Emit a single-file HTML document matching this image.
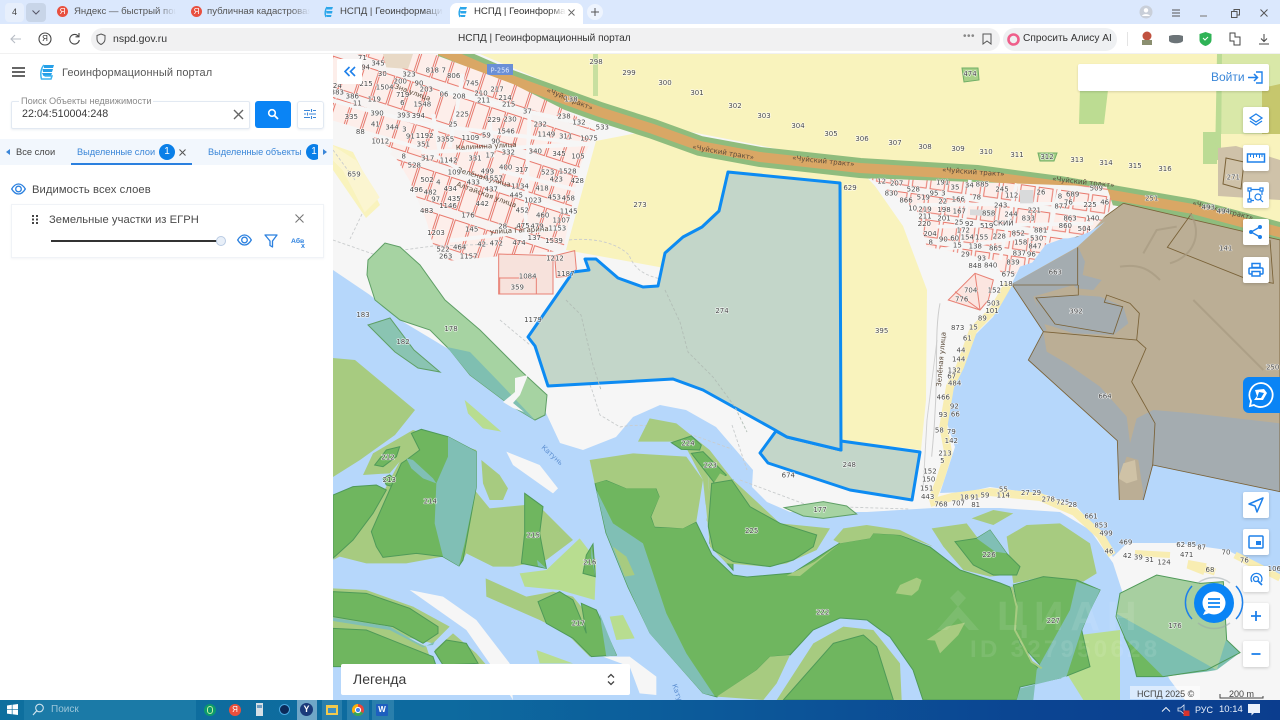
<!DOCTYPE html>
<html lang="ru"><head><meta charset="utf-8"><title>НСПД | Геоинформационный портал</title>
<style>
html,body{margin:0;padding:0;width:1280px;height:720px;overflow:hidden;background:#fff;font-family:"Liberation Sans","Noto Sans CJK SC",sans-serif}
.a{position:absolute;white-space:nowrap}
.btn{position:absolute;width:26px;height:26px;left:1243px;background:#fff;border-radius:2px;box-shadow:0 1px 3px rgba(0,0,0,.18)}
.btn svg{position:absolute;left:3px;top:3px}
svg text{font-family:"DejaVu Sans",sans-serif}
.lb text{font-size:21px;fill:#4a4a4a;text-anchor:middle;dominant-baseline:central;paint-order:stroke;stroke:#fff;stroke-width:4px;stroke-linejoin:round;stroke-opacity:.75}
.tab{position:absolute;top:5px;font-size:9.6px;color:#444;height:14px;line-height:14px;overflow:hidden;white-space:nowrap;-webkit-mask-image:linear-gradient(90deg,#000 82%,transparent);mask-image:linear-gradient(90deg,#000 82%,transparent)}
</style></head><body>

<!-- MAP -->
<svg class="a" style="left:0;top:0" width="1280" height="720" viewBox="0 0 1280 720">
<defs>
<pattern id="p" patternUnits="userSpaceOnUse" width="50" height="118" patternTransform="rotate(18)">
<rect width="50" height="118" fill="#f7f3f2"/>
<rect x="3" y="6" width="44" height="88" fill="#fdeeea" stroke="#e8786c" stroke-width="3"/>
</pattern>
<pattern id="q" patternUnits="userSpaceOnUse" width="54" height="72" patternTransform="rotate(8)">
<rect width="54" height="72" fill="#f6f5f4"/>
<rect x="4" y="6" width="42" height="50" fill="#fdeeea" stroke="#e8786c" stroke-width="3"/>
</pattern>
<clipPath id="mc"><rect x="333" y="54" width="947" height="646"/></clipPath>
</defs>
<g clip-path="url(#mc)">
<rect x="333" y="54" width="947" height="646" fill="#b6d7fb"/>
<!-- main land -->
<polygon fill="#f6f6f6" points="333,54 1280,54 1280,240 1107,223 1043,247 1013,283 993,317 973,337 960,367 950,400 947,423 955,447 940,493 967,492 990,487 1047,495 1077,507 1097,530 1113,557 1127,543 1177,543 1227,550 1280,577 1280,700 1185,700 1170,680 1125,600 1113,563 1090,530 1060,512 1000,508 933,508 867,512 790,512 767,502 752,487 753,470 716,427 686,410 660,405 633,417 616,437 583,450 560,443 546,413 530,410 490,385 450,350 400,320 370,295 333,270"/>
<!-- yellow -->
<polygon fill="#f9f3bd" points="480,54 1280,54 1280,225 1190,205 1060,183 860,165 640,122"/>
<polygon fill="#f9f3bd" points="596,141 653,130 860,170 875,186 903,226 927,290 926,400 921,450 840,440 840,300 566,250"/>
<polygon fill="#f9f3bd" points="333,145 353,152 380,205 366,218 333,170"/>
<!-- top right patches -->
<polygon fill="#d9e8a8" points="1217,54 1280,54 1280,134 1217,134"/>
<polygon fill="#c6c76d" points="1262,88 1280,84 1280,134 1262,134"/>
<polygon fill="#bcdc92" points="1080,88 1108,90 1104,124 1079,124"/>
<polygon fill="#bbdb94" points="1203,132 1217,132 1217,164 1203,164"/>
<polygon fill="#bbdb94" points="1217,54 1222,54 1221,160 1215,160"/>
<polygon fill="#c8dfa0" points="593,54 598,54 598,96 593,96"/>
<polygon fill="#a8d088" stroke="#6fae66" points="962,68 978,68 979,80 964,82"/>
<polygon fill="#a8d088" stroke="#6fae66" points="1038,153 1057,153 1054,161 1040,161"/>
<polygon fill="#f9f3bd" points="1221,134 1280,134 1280,210 1221,200"/>
<polygon fill="#cfc2a9" points="1218,148 1236,146 1280,160 1280,200 1218,196"/>
<path d="M1226 158l18 4-3 27-18-5z" fill="none" stroke="#7a6238"/>
<!-- road -->
<polyline fill="none" stroke="#8fbc7d" stroke-width="20" points="440,50 500,76 600,112 653,129 700,146 760,157 860,168 977,175 1060,186 1193,209 1290,235"/>
<polyline fill="none" stroke="#d9a765" stroke-width="10" points="440,50 500,76 600,112 653,129 700,146 760,157 860,168 977,175 1060,186 1193,209 1290,235"/>
<rect x="487" y="64" width="26" height="11" fill="#6a8fd6"/><text x="500" y="72.500" font-size="6.600" fill="#dfe8fb" text-anchor="middle">Р-256</text>
<!-- settlement west -->
<g transform="translate(333 54) scale(.33333)">
<polygon fill="url(#p)" points="0,0 300,0 540,90 680,160 790,220 740,340 690,590 350,620 300,570 280,500 230,380 170,280 70,220 0,200"/>
<polygon fill="#e8d9c6" points="150,0 240,0 225,45 160,40"/>
<polygon fill="url(#p)" points="170,300 195,280 260,330 240,350"/>
<g fill="none" stroke="#f6f6f6" stroke-width="12">
<path d="M0 140L110 170 270 210 760 270"/><path d="M60 225L270 285 470 395 720 480"/><path d="M265 295L770 270"/>
<path d="M500 350L740 410"/><path d="M350 560L700 520"/><path d="M320 110L790 220"/><path d="M470 200L480 310"/><path d="M300 180L320 290"/><path d="M590 170L575 560"/><path d="M390 60L350 280"/>
</g>
<polygon fill="#f7e2dc" stroke="#e88074" stroke-width="3" points="497,600 660,605 660,720 497,720"/>
<path d="M497 672H610V720M500 670V720" fill="none" stroke="#e88074" stroke-width="3"/>
<polygon fill="#f7e2dc" stroke="#e88074" stroke-width="3" points="665,605 725,590 730,645 720,665 670,670"/>
<polygon fill="#fbf5d0" points="0,275 70,320 140,430 95,475 30,350 0,320"/>
</g>
<!-- dashed -->
<g fill="none" stroke="#c9cccd" stroke-width=".9" stroke-dasharray="3 2">
<path d="M333 150l22 30M333 240l40 14 60-8 66-2M362 214l-12 25M569 240c30-3 50 5 60 15 10 25 30 20 45 30l20 35 25 20 12 25M500 320l30 25M560 300l12 40 20 50 8 25 20 12c40-8 90 15 112 22M732 425l15 45M740 480l70 26 100 3"/>
<path d="M937 340l-10 80-4 70" stroke="#aaa" stroke-dasharray="none" opacity=".5"/>
</g>
<!-- NE brown + grey -->
<g transform="translate(860 160) scale(.33333)">
<polygon fill="#bbae95" points="790,130 1260,240 1260,995 878,915 845,1020 778,1020 772,842 505,600 550,515 455,372"/>
<polygon fill="#a4acb0" points="455,372 655,262 675,305 668,345 725,360 700,390 650,385 640,375 520,410 560,510 550,515"/>
<polygon fill="#a4acb0" points="525,410 650,405 720,410 790,440 805,490 760,525 640,520 580,500 545,490"/>
<polygon fill="#a4acb0" points="550,515 505,600 772,842 778,1020 850,1020 878,915 1260,995 1260,790 1000,760 880,750 830,775 810,850 800,770 720,680 620,610 560,575"/>
<polygon fill="#bbae95" points="800,890 835,900 850,1000 845,1020 778,1020 775,960"/>
<polygon fill="#cfc2a6" points="790,910 825,900 832,960 800,970 775,955"/>
<g fill="none" stroke="#7a6238" stroke-width="2.600">
<path d="M790 130L1260 240V995L878 915 850 1020M778 1020L772 842 505 600 550 515 455 372 790 130"/>
<path d="M653 262V375H455M655 375V405L528 414 585 492 760 522 788 440 733 427 740 405 810 430 838 460 830 540 550 515M830 540L858 565 815 665 885 790 878 918M995 160L922 262 1148 352 1240 370 1230 240"/>
</g>
<path d="M780 320c60-10 90 10 120 40M850 280l40-70 60-10M990 160c40 60 10 130-60 150M1000 420c60 60 130 130 210 210" fill="none" stroke="#a79a82" stroke-width="6" opacity=".7"/>
<!-- east settlement -->
<polygon fill="url(#q)" points="30,55 740,80 760,140 690,220 560,250 500,330 430,350 400,300 200,260 170,150"/>
<g fill="none" stroke="#f6f6f6" stroke-width="11"><path d="M170 135L720 130M230 200L700 190M240 270L560 220M330 60L300 280M470 70L420 300M600 80L560 250"/></g>
<polygon fill="#d9dadb" points="330,148 400,150 400,170 330,165"/><polygon fill="#d9dadb" points="480,90 520,90 520,130 480,130"/>
<polygon fill="#b6d7fb" points="735,185 650,262 455,372 480,320 540,300 555,255 610,235 640,235 690,215"/>
<polygon fill="#fbe5e0" stroke="#e88074" stroke-width="3" points="265,420 345,340 400,360 385,420 360,450"/>
<path d="M285 395l75 55M345 340l15 110" stroke="#e88074" stroke-width="3" fill="none"/>
<polyline fill="none" stroke="#f8edb2" stroke-width="24" points="445,372 400,450 340,510 300,620 270,680 250,800 265,880 240,960 220,1010"/>
<path d="M240 430c-20 100 0 220-25 460" fill="none" stroke="#ccc" stroke-width="3"/>
</g>
<polyline fill="none" stroke="#f8edb2" stroke-width="8" points="930,503 952,497 990,492 1040,497 1075,512 1100,535 1112,555"/>
<polyline fill="none" stroke="#f8edb2" stroke-width="6" points="1135,553 1170,555"/><polyline fill="none" stroke="#f8edb2" stroke-width="7" points="1195,566 1215,572"/><polyline fill="none" stroke="#f8edb2" stroke-width="7" points="1235,555 1280,578"/>

<!-- West vegetation -->
<polygon fill="#a6d3a2" stroke="#5f9f66" points="368,260 385,243 400,247 420,265 445,300 480,330 520,370 547,395 545,415 535,420 510,405 470,375 450,350 430,330 400,320 375,300 367,275"/>
<polygon fill="#7fbfb1" points="447,347 470,352 500,383 535,420 510,405 470,375"/>
<polygon fill="#f6f6f6" points="515,378 528,375 520,395 513,403 524,412 513,408 503,402 515,392"/>
<polygon fill="#8ac4b2" stroke="#5f9f66" points="368,325 390,318 414,350 440,372 418,368 395,352"/>
<polygon fill="#a7cb80" points="333,358 355,360 415,410 395,435 360,460 333,477"/>
<!-- 222 merged -->
<polygon fill="#6fb65f" stroke="#4f9a58" points="595,483 606,480 626,488 656,488 660,497 651,517 655,527 683,528 696,522 712,555 733,575 747,577 793,573 840,543 870,538 873,533 900,535 930,547 960,570 1000,583 1010,587 1017,607 1015,630 1030,660 1037,667 1060,678 1020,687 1017,700 923,700 913,670 890,637 867,620 840,618 813,630 790,655 770,657 757,670 717,697 703,693 650,633 628,587 606,533"/>
<g transform="translate(333 400) scale(.33333)">
<g fill="#a7cb80">
<polygon points="90,225 120,160 240,90 430,150 430,260 425,270 470,325 575,315 630,330 720,420 640,480 540,500 480,500 400,460 385,490 330,470 220,490 100,490 20,470 0,480 130,310 160,260 200,185 170,220"/>
<polygon points="445,180 500,225 525,265 510,300 470,300 450,250"/>
<polygon points="458,535 580,590 660,575 720,590 770,650 820,760 770,770 700,700 620,660 460,590"/>
<polygon points="0,565 100,570 240,620 350,680 300,730 0,660"/>
<polygon points="305,750 360,700 430,760 460,795 330,795"/>
<polygon points="0,660 170,690 280,740 300,800 0,800"/>
<polygon points="770,180 900,160 1060,170 1110,240 1090,365 1050,385 965,380 955,350 980,290 970,265 880,265 820,240 785,250"/>
<polygon points="915,125 950,55 1030,70 1130,150 1200,240 1130,310 1120,360 1200,510 1130,430 1110,240 1050,125"/>
</g>
<g fill="#b6d7fb"><path d="M1120 160L1130 290 1100 350 1130 430 1200 510 1200 480 1150 440 1120 370 1128 270 1120 170z"/></g>
<g fill="#b8dd90">
<polygon points="395,0 430,30 505,95 450,85 405,40"/>
<polygon points="560,520 640,510 740,415 790,480 785,600 680,570 575,560"/>
<polygon points="830,650 870,645 905,715 850,720"/>
<polygon points="610,750 720,790 620,790"/>
</g>
<g fill="#f6f6f6">
<polygon points="520,155 620,195 675,265 660,280 540,195"/>
<polygon points="230,570 330,590 430,660 530,790 540,900 470,790 400,690"/>
<polygon points="810,770 890,770 970,830 970,885 920,880 890,800"/>
</g>
<g fill="#6fb65f" stroke="#4f9a58" stroke-width="3">
<polygon points="125,195 160,150 200,140 190,170 150,200"/>
<polygon points="150,235 170,225 190,240 200,265 160,255"/>
<polygon points="0,285 60,260 130,255 160,270 120,340 60,420 0,475"/>
<polygon points="235,100 265,88 345,110 430,155 430,260 390,480 378,498 330,470 250,460 150,472 130,440 115,395 170,270 205,190 220,180 260,150"/>
<polygon points="575,280 630,320 620,400 640,505 565,490 575,400"/>
<polygon points="780,432 787,530 750,520 760,465"/>
<polygon points="615,605 680,575 720,600 745,660 760,700 745,610 790,630 850,765 775,770 720,715 640,670"/>
<polygon points="0,575 100,580 230,625 315,680 315,700 270,730 180,680 0,650"/>
<polygon points="305,755 340,720 400,730 435,790 330,795"/>
<polygon points="0,685 100,690 300,770 310,800 0,800"/>
<polygon points="1015,128 1075,108 1105,135 1100,150 1045,148"/>
<polygon points="1075,160 1110,155 1180,225 1145,250"/>
<polygon points="1130,380 1145,280 1180,240 1200,240 1200,510 1130,430"/>
</g>
<g fill="#80bfb5">
<polygon points="345,110 430,155 430,260 395,430 378,498 330,470 305,370 310,250 345,170"/>
<polygon points="220,175 240,180 300,235 310,250 270,235 235,205"/>
<polygon points="790,270 840,370 930,430 960,520 1000,640 1060,760 1145,888 1110,880 950,700 885,560 820,400"/>
<polygon points="800,640 850,765 820,770"/>
<polygon points="612,480 640,505 615,498"/>
<polygon points="775,435 787,530 775,470"/>
<path d="M0 653L170 680 270 738 300 735 305 725 270 742 170 690 0 663z"/>
</g>
<polygon fill="#a7cb80" points="840,440 880,470 905,525 875,530"/>
</g>
<!-- zoom 10 vegetation -->
<g transform="translate(700 430) scale(.33333)">
<g fill="#a7cb80">
<polygon points="15,200 60,130 100,150 240,280 390,295 350,360 260,400 200,410 80,400 30,350"/>
<polygon points="400,330 430,295 500,285 600,300 700,350 600,315 520,310 510,325 420,340"/>
<polygon points="260,437 345,395 420,340 300,438"/>
<polygon points="695,295 800,280 830,320 900,370 960,430 870,440 790,420 730,350"/>
<polygon points="815,265 880,240 940,250 880,285"/>
<polygon points="920,320 980,285 1080,280 1170,340 1190,430 1150,455 1030,440 940,460"/>
<polygon points="230,810 340,640 430,590 520,600 600,700 605,810"/>
<polygon points="50,800 170,720 210,680 270,675 230,760 190,810"/>
</g>
<polygon fill="#b8dd90" points="1100,620 1260,600 1260,810 1150,810 1100,730"/>
<g fill="#6fb65f" stroke="#4f9a58" stroke-width="3">
<polygon points="35,160 95,150 150,230 240,280 350,315 340,350 280,390 210,410 100,395 40,360 25,290"/>
<polygon points="250,810 400,640 490,615 530,650 580,810"/>
<polygon points="765,335 830,325 870,300 920,370 960,410 950,435 880,435 820,405"/>
<polygon points="940,465 1030,440 1130,450 1200,480 1170,540 1145,600 1170,710 1100,738 1020,705 960,640 945,590 950,520"/>
</g>
<polygon fill="#a7cb80" points="587,490 600,465 650,443 665,450 655,480 635,497"/>
<polygon fill="#a7cb80" points="680,630 740,590 795,578 775,615 720,670 705,632"/>
<polygon fill="#80bfb5" points="830,325 870,300 920,370 885,365"/>
<polygon fill="#80bfb5" points="1130,455 1200,480 1145,600 1100,738 1080,745 960,775 950,810 1000,810 1010,720 1110,540"/>
<polygon fill="#a6d3a2" stroke="#5f9f66" stroke-width="3" points="253,233 370,215 440,228 470,252 370,265 310,258"/>
<path d="M935 470l15 60-5 70 50 95 30 20" fill="none" stroke="#a7cb80" stroke-width="6"/>
</g>
<!-- 176 -->
<g transform="translate(1060 480) scale(.33333)">
<polygon fill="#a7cfa0" points="168,410 180,340 290,285 420,310 490,305 500,480 470,570 168,410"/>
<polygon fill="#7cbfb0" points="168,400 470,570 440,575 310,590 230,590 210,510"/>
<polygon fill="#7cbfb0" points="470,570 498,480 540,518"/>
<polygon fill="#6fb860" points="190,470 310,590 230,590 210,510"/>
<polygon fill="none" stroke="#4f9a58" stroke-width="3" points="168,410 180,340 290,285 420,310 490,305 500,480 540,518 440,570 310,590 230,590 210,510"/>
<polygon fill="#f8edb2" points="385,240 440,250 430,285 380,265"/>
</g>
<!-- blue parcels -->
<polygon fill="#c3d6c9" stroke="#0d8bf2" stroke-width="3" stroke-linejoin="round" points="776,431 760,453 768,463 850,490 912,500 920,452 841,441 841,450 787,437"/>
<polygon fill="#c3d6c9" stroke="#0d8bf2" stroke-width="3" stroke-linejoin="round" points="728,172 840,183 841,450 787,437 775,430 703,390 673,379 548,386 535,346 528,337 573,272 589,270 585,259 596,259 618,278 643,287 658,286 665,253 683,237 702,227 719,211"/>
<g fill="none" stroke="#b2beb6" stroke-width=".9" stroke-dasharray="3 2"><path d="M665 290l15 32 8 30 25 25 22 30 12 25M566 300l15 15 12 50 8 25"/></g>

<!-- Street texts -->
<g font-size="7" fill="#5a4a3a">
<text x="0" y="0" transform="translate(546 92) rotate(22)">«Чуйс  тракт»</text>
<text x="0" y="0" transform="translate(692 149) rotate(10)">«Чуйский тракт»</text>
<text x="0" y="0" transform="translate(792 160) rotate(6)">«Чуйский тракт»</text>
<text x="0" y="0" transform="translate(942 172) rotate(4)">«Чуйский тракт»</text>
<text x="0" y="0" transform="translate(1052 181) rotate(6)">«Чуйский тракт»</text>
<text x="0" y="0" transform="translate(1192 205) rotate(14)">«Чуйский тракт»</text>
<text x="0" y="0" transform="translate(456 150) rotate(-3)">Калинина улица</text>
<text x="0" y="0" transform="translate(457 172) rotate(16)">Зелёная улица</text>
<text x="0" y="0" transform="translate(456 186) rotate(20)">Алтайская улица</text>
<text x="0" y="0" transform="translate(490 234) rotate(-3)">улица Гагарина</text>
<text x="0" y="0" transform="translate(941 387) rotate(-85)">Зелёная улица</text>
<text x="0" y="0" transform="translate(394 88) rotate(20)">Зна улица</text>
</g>
<g font-size="7" fill="#5d8fd1"><text transform="translate(541 448) rotate(42)">Катунь</text><text transform="translate(672 685) rotate(70)">Катунь</text></g>

<!-- Labels -->
<g class="lb" transform="translate(333 54) scale(.33333)">
<text x="135" y="28">345</text><text x="148" y="60">30</text><text x="98" y="40">94</text><text x="228" y="62">323</text><text x="298" y="50">818</text><text x="332" y="50">7</text><text x="362" y="66">806</text><text x="418" y="88">745</text><text x="492" y="106">217</text><text x="444" y="118">210</text><text x="452" y="140">211</text><text x="516" y="132">214</text><text x="527" y="152">215</text><text x="583" y="172">37</text><text x="714" y="137">138</text><text x="693" y="187">238</text><text x="738" y="206">132</text><text x="622" y="212">232</text><text x="808" y="220">533</text><text x="768" y="254">1075</text><text x="698" y="247">311</text><text x="640" y="242">1149</text><text x="483" y="198">229</text><text x="531" y="196">230</text><text x="519" y="233">1546</text><text x="388" y="182">225</text><text x="360" y="212">25</text><text x="333" y="122">06</text><text x="378" y="127">208</text><text x="280" y="106">203</text><text x="258" y="88">90</text><text x="202" y="82">200</text><text x="99" y="90">215</text><text x="155" y="100">1504</text><text x="209" y="123">719</text><text x="268" y="152">1548</text><text x="208" y="147">6</text><text x="124" y="136">119</text><text x="58" y="127">386</text><text x="73" y="149">11</text><text x="13" y="116">383</text><text x="13" y="96">24</text><text x="55" y="189">335</text><text x="132" y="178">390</text><text x="212" y="185">393</text><text x="256" y="186">394</text><text x="127" y="212">41</text><text x="177" y="220">344</text><text x="214" y="226">3</text><text x="232" y="247">91</text><text x="275" y="246">1192</text><text x="271" y="272">351</text><text x="337" y="256">3355</text><text x="412" y="252">1109</text><text x="460" y="245">59</text><text x="488" y="262">90</text><text x="526" y="295">332</text><text x="607" y="293">340</text><text x="678" y="300">345</text><text x="735" y="308">105</text><text x="82" y="234">88</text><text x="142" y="262">1012</text><text x="212" y="307">8</text><text x="244" y="335">528</text><text x="284" y="313">317</text><text x="347" y="320">1142</text><text x="426" y="313">331</text><text x="471" y="304">17</text><text x="518" y="340">400</text><text x="566" y="348">317</text><text x="644" y="356">523</text><text x="704" y="352">1528</text><text x="670" y="376">423</text><text x="733" y="381">428</text><text x="364" y="356">109</text><text x="463" y="352">499</text><text x="483" y="373">1557</text><text x="421" y="386">433</text><text x="282" y="378">502</text><text x="316" y="385">4</text><text x="292" y="416">482</text><text x="352" y="405">434</text><text x="250" y="408">496</text><text x="308" y="436">97</text><text x="363" y="435">435</text><text x="345" y="456">1146</text><text x="448" y="450">442</text><text x="475" y="406">437</text><text x="561" y="397">1134</text><text x="627" y="403">418</text><text x="550" y="424">445</text><text x="600" y="440">1023</text><text x="664" y="431">453</text><text x="706" y="433">458</text><text x="281" y="471">483</text><text x="568" y="469">452</text><text x="707" y="472">1145</text><text x="629" y="485">460</text><text x="685" y="499">1107</text><text x="405" y="485">176</text><text x="416" y="527">145</text><text x="509" y="518">28</text><text x="570" y="516">475</text><text x="612" y="518">479</text><text x="673" y="523">1153</text><text x="309" y="537">1203</text><text x="604" y="552">137</text><text x="663" y="561">1539</text><text x="330" y="587">522</text><text x="338" y="607">263</text><text x="380" y="580">464</text><text x="407" y="607">1157</text><text x="446" y="571">42</text><text x="490" y="569">472</text><text x="558" y="567">474</text><text x="666" y="614">1212</text><text x="584" y="667">1084</text><text x="553" y="701">359</text><text x="698" y="660">1187</text><text x="63" y="362">659</text><text x="921" y="453">273</text><text x="88" y="12">71</text><text x="600" y="798">1179</text>
</g>
<g class="lb" transform="scale(.33333)">
<text x="1788" y="186">298</text><text x="1887" y="219">299</text><text x="1995" y="249">300</text><text x="2091" y="279">301</text><text x="2205" y="318">302</text><text x="2292" y="348">303</text><text x="2394" y="378">304</text><text x="2493" y="402">305</text><text x="2586" y="417">306</text><text x="2685" y="429">307</text><text x="2775" y="441">308</text><text x="2874" y="447">309</text><text x="2958" y="456">310</text><text x="3051" y="465">311</text><text x="3141" y="471">312</text><text x="3231" y="480">313</text><text x="3318" y="489">314</text><text x="3405" y="498">315</text><text x="3495" y="507">316</text><text x="2910" y="222">474</text><text x="2550" y="564">629</text><text x="2166" y="933">274</text><text x="1353" y="987">178</text><text x="1209" y="1026">182</text><text x="1089" y="945">183</text>
</g>
<g class="lb" transform="translate(860 160) scale(.33333)">
<text x="65" y="65">12</text><text x="110" y="70">207</text><text x="94" y="100">830</text><text x="160" y="88">528</text><text x="138" y="122">866</text><text x="190" y="112">519</text><text x="158" y="146">10</text><text x="195" y="148">219</text><text x="195" y="170">211</text><text x="193" y="192">220</text><text x="210" y="222">204</text><text x="212" y="247">8</text><text x="248" y="68">191</text><text x="285" y="82">35</text><text x="328" y="76">34</text><text x="367" y="74">885</text><text x="426" y="88">245</text><text x="455" y="106">112</text><text x="222" y="100">95</text><text x="250" y="100">3</text><text x="248" y="125">22</text><text x="295" y="118">166</text><text x="350" y="112">78</text><text x="422" y="136">243</text><text x="252" y="150">198</text><text x="298" y="155">167</text><text x="386" y="160">858</text><text x="453" y="164">244</text><text x="252" y="176">201</text><text x="297" y="188">25</text><text x="328" y="192">92</text><text x="380" y="198">519</text><text x="430" y="190">СКИЙ</text><text x="310" y="212">172</text><text x="322" y="232">154</text><text x="365" y="232">155</text><text x="418" y="230">228</text><text x="250" y="238">90</text><text x="284" y="236">60</text><text x="292" y="257">15</text><text x="346" y="260">138</text><text x="407" y="265">865</text><text x="475" y="220">852</text><text x="542" y="212">881</text><text x="505" y="176">833</text><text x="523" y="152">221</text><text x="543" y="98">26</text><text x="600" y="110">8</text><text x="638" y="104">689</text><text x="625" y="128">76</text><text x="603" y="140">877</text><text x="690" y="135">225</text><text x="734" y="128">46</text><text x="709" y="86">509</text><text x="875" y="115">251</text><text x="630" y="176">863</text><text x="698" y="176">140</text><text x="616" y="198">860</text><text x="673" y="207">504</text><text x="530" y="235">530</text><text x="482" y="248">158</text><text x="525" y="260">847</text><text x="478" y="280">837</text><text x="514" y="283">96</text><text x="316" y="283">29</text><text x="365" y="295">93</text><text x="459" y="307">839</text><text x="345" y="318">848</text><text x="392" y="316">840</text><text x="445" y="343">675</text><text x="438" y="372">118</text><text x="586" y="337">663</text><text x="648" y="455">392</text><text x="332" y="392">704</text><text x="403" y="392">152</text><text x="305" y="418">776</text><text x="400" y="430">503</text><text x="396" y="453">101</text><text x="367" y="475">89</text><text x="293" y="504">873</text><text x="340" y="503">15</text><text x="322" y="536">61</text><text x="303" y="571">44</text><text x="296" y="598">144</text><text x="283" y="631">132</text><text x="275" y="650">67</text><text x="284" y="670">484</text><text x="250" y="713">466</text><text x="283" y="739">92</text><text x="249" y="765">93</text><text x="286" y="763">66</text><text x="238" y="812">58</text><text x="274" y="816">79</text><text x="274" y="843">142</text><text x="65" y="513">395</text><text x="735" y="710">664</text><text x="1120" y="52">271</text><text x="1045" y="142">493</text><text x="1090" y="155">494</text><text x="1097" y="265">141</text><text x="1238" y="623">250</text>
</g>
<g class="lb" transform="translate(700 430) scale(.33333)">
<text x="265" y="137">674</text><text x="448" y="105">248</text><text x="360" y="240">177</text><text x="155" y="303">225</text><text x="368" y="547">222</text><text x="867" y="375">226</text><text x="1060" y="573">227</text><text x="735" y="70">213</text><text x="727" y="93">5</text><text x="690" y="124">152</text><text x="686" y="148">150</text><text x="680" y="175">151</text><text x="683" y="201">443</text><text x="723" y="224">768</text><text x="775" y="221">707</text><text x="793" y="202">18</text><text x="824" y="202">91</text><text x="827" y="225">81</text><text x="855" y="196">59</text><text x="910" y="178">55</text><text x="910" y="197">114</text><text x="976" y="189">27</text><text x="1010" y="189">29</text><text x="1045" y="209">278</text><text x="1088" y="218">725</text><text x="1118" y="225">28</text><text x="1173" y="259">661</text><text x="1203" y="286">853</text><text x="1218" y="310">499</text><text x="1227" y="365">46</text>
</g>
<g class="lb" transform="translate(1060 480) scale(.33333)">
<text x="197" y="188">469</text><text x="362" y="195">62</text><text x="395" y="195">85</text><text x="425" y="203">87</text><text x="380" y="225">471</text><text x="498" y="218">70</text><text x="553" y="241">76</text><text x="643" y="267">106</text><text x="450" y="270">68</text><text x="202" y="228">42</text><text x="235" y="233">39</text><text x="268" y="240">31</text><text x="312" y="247">124</text><text x="345" y="438">176</text>
</g>
<g class="lb" transform="translate(333 400) scale(.33333)">
<text x="165" y="173">212</text><text x="169" y="240">213</text><text x="292" y="305">214</text><text x="601" y="407">215</text><text x="770" y="488">216</text><text x="736" y="670">217</text><text x="1065" y="130">224</text><text x="1132" y="197">223</text>
</g>
<!-- Watermark -->
<g fill="#fff" opacity=".09">
<path d="M937 630l21-24 21 24h-10l-11-12-11 12z M958 590l8 8-8 9-8-9z"/>
<text x="997" y="630" font-size="41" font-weight="700" letter-spacing="7" style="font-family:'Liberation Sans',sans-serif">ЦИАН</text>
<text x="970" y="657" font-size="24" font-weight="700" letter-spacing="3.300" style="font-family:'Liberation Sans',sans-serif">ID 327950628</text>
</g>
<!-- footer -->
<rect x="1130" y="686" width="70" height="13" fill="#fff" opacity=".5"/>
<text x="1137" y="697" font-size="9" fill="#444" style="font-family:'Liberation Sans',sans-serif">НСПД 2025 ©</text>
<text x="1229" y="697" font-size="9" fill="#444" style="font-family:'Liberation Sans',sans-serif">200 m</text>
<path d="M1220 694v4h43v-2" fill="none" stroke="#444"/>
</g>
</svg>

<!-- LEFT PANEL -->
<div class="a" style="left:0;top:54px;width:333px;height:646px;background:#fff"></div>
<svg class="a" style="left:12px;top:67px" width="13" height="10"><path d="M0 1h13M0 5h13M0 9h13" stroke="#333" stroke-width="1.600"/></svg>
<svg class="a" style="left:40px;top:64px" width="15" height="16" viewBox="0 0 15 16"><path d="M4 1h10l-1 3H4zM2.500 5h10.500l-1 3H3zM2 9h10l-1 3H3.500z" fill="#27a0e8"/><path d="M4 1C1 4 0 10 1.500 15H11l1-3H4.500" fill="none" stroke="#3db4ef" stroke-width="1.500"/></svg>
<div class="a" style="left:62px;top:66px;font-size:11px;line-height:14px;color:#585858;letter-spacing:.1px">Геоинформационный портал</div>
<div class="a" style="left:11px;top:101px;width:237px;height:26px;border:1px solid #e2e9f2;border-radius:2px;box-shadow:0 1px 2px rgba(60,90,140,.1)"></div>
<div class="a" style="left:19px;top:96px;padding:0 2px;background:#fff;font-size:9.200px;line-height:11px;color:#8a8a8a">Поиск Объекты недвижимости</div>
<div class="a" style="left:22px;top:107px;font-size:10.700px;line-height:14px;color:#3b3b3b">22:04:510004:248</div>
<svg class="a" style="left:233px;top:109px" width="11" height="11"><path d="M1 1l9 9M10 1l-9 9" stroke="#666" stroke-width="1.400"/></svg>
<div class="a" style="left:255px;top:101px;width:36px;height:27px;background:#0a84f5;border-radius:3px"></div>
<svg class="a" style="left:267px;top:108px" width="12" height="12"><circle cx="5" cy="5" r="3.300" fill="none" stroke="#fff" stroke-width="1.600"/><path d="M7.500 7.500L11 11" stroke="#fff" stroke-width="1.800"/></svg>
<div class="a" style="left:297px;top:101px;width:25px;height:26px;border:1px solid #e2e9f2;border-radius:3px;box-shadow:0 1px 2px rgba(60,90,140,.1)"></div>
<svg class="a" style="left:304px;top:108px" width="12" height="12"><path d="M0 2.500h6M9 2.500h3M7.500 1v3M0 6h2M5 6h7M3.500 4.500v3M0 9.500h6M9 9.500h3M7.500 8v3" stroke="#3a86d8" stroke-width="1.100" fill="none"/></svg>
<div class="a" style="left:0;top:139px;width:333px;height:26px;background:#f2f7fd"></div>
<svg class="a" style="left:6px;top:149px" width="4" height="6"><path d="M4 0v6L0 3z" fill="#3a86d8"/></svg>
<div class="a" style="left:16px;top:145px;font-size:9.300px;line-height:14px;color:#444">Все слои</div>
<div class="a" style="left:77px;top:145px;font-size:9.200px;line-height:14px;color:#3a86d8">Выделенные слои</div>
<div class="a" style="left:159px;top:144px;width:16px;height:16px;border-radius:8px;background:#0a7fe8;color:#fff;font-size:10px;line-height:16px;text-align:center">1</div>
<svg class="a" style="left:179px;top:149px" width="7" height="7"><path d="M.5.500l6 6M6.500.500l-6 6" stroke="#555" stroke-width="1"/></svg>
<div class="a" style="left:71px;top:163px;width:121px;height:2px;background:#2b80df"></div>
<div class="a" style="left:208px;top:145px;font-size:9.200px;line-height:14px;color:#3a86d8">Выделенные объекты</div>
<div class="a" style="left:306px;top:144px;width:12px;height:16px;overflow:hidden"><div style="width:16px;height:16px;border-radius:8px;background:#0a7fe8;color:#fff;font-size:10px;line-height:16px;text-align:center">1</div></div>
<svg class="a" style="left:323px;top:149px" width="4" height="6"><path d="M0 0v6l4-3z" fill="#3a86d8"/></svg>
<svg class="a" style="left:11px;top:183px" width="15" height="12" viewBox="0 0 15 12"><path d="M.7 6C3 2 5 1 7.500 1S12 2 14.300 6C12 10 10 11 7.500 11S3 10 .7 6z" fill="none" stroke="#2b80df" stroke-width="1.300"/><circle cx="7.500" cy="6" r="2.800" fill="none" stroke="#2b80df" stroke-width="1.300"/></svg>
<div class="a" style="left:32px;top:183px;font-size:11.200px;line-height:14px;color:#4b4b4b;letter-spacing:.1px">Видимость всех слоев</div>
<div class="a" style="left:11px;top:204px;width:311px;height:52px;border:1px solid #f0f3f7;box-shadow:0 1px 2px rgba(60,90,140,.06)"></div>
<svg class="a" style="left:32px;top:215px" width="6" height="9"><g fill="#444"><rect width="2" height="2"/><rect x="4" width="2" height="2"/><rect y="3.500" width="2" height="2"/><rect x="4" y="3.500" width="2" height="2"/><rect y="7" width="2" height="2"/><rect x="4" y="7" width="2" height="2"/></g></svg>
<div class="a" style="left:49px;top:213px;font-size:11.200px;line-height:14px;color:#4b4b4b;letter-spacing:.05px">Земельные участки из ЕГРН</div>
<svg class="a" style="left:295px;top:214px" width="9" height="9"><path d="M.5.500l8 8M8.500.500l-8 8" stroke="#777" stroke-width="1.100"/></svg>
<div class="a" style="left:51px;top:240px;width:166px;height:1.500px;background:#333"></div>
<div class="a" style="left:216px;top:236px;width:8px;height:8px;border:1px solid #b9cbe3;border-radius:50%;background:#e8eff8"></div>
<svg class="a" style="left:237px;top:234px" width="15" height="12" viewBox="0 0 15 12"><path d="M.7 6C3 2 5 1 7.500 1S12 2 14.300 6C12 10 10 11 7.500 11S3 10 .7 6z" fill="none" stroke="#2b80df" stroke-width="1.300"/><circle cx="7.500" cy="6" r="2.800" fill="none" stroke="#2b80df" stroke-width="1.300"/></svg>
<svg class="a" style="left:264px;top:234px" width="14" height="14"><path d="M1 1h12L8.500 7v6L6 11.500V7z" fill="none" stroke="#2b80df" stroke-width="1.300" stroke-linejoin="round"/></svg>
<div class="a" style="left:291px;top:237px;font-size:6.800px;line-height:9px;font-weight:700;color:#2b80df">Абв</div>
<div class="a" style="left:301px;top:242px;font-size:7px;line-height:9px;font-weight:700;color:#2b80df">x</div>

<!-- MAP CONTROLS -->
<div class="a" style="left:337px;top:59px;width:25px;height:25px;background:#fff;border-radius:2px"></div>
<svg class="a" style="left:344px;top:66px" width="12" height="11"><path d="M5.500 1L1 5.500 5.500 10M11 1L6.500 5.500 11 10" fill="none" stroke="#1e80ea" stroke-width="1.600"/></svg>
<div class="a" style="left:1078px;top:64px;width:191px;height:27px;background:#fff;border-radius:2px;box-shadow:0 1px 2px rgba(0,0,0,.15)"></div>
<div class="a" style="left:1211px;top:70px;font-size:12px;line-height:14px;color:#3a86d8">Войти</div>
<svg class="a" style="left:1248px;top:71px" width="15" height="13"><path d="M0 6.500h9M6 3l3.500 3.500L6 10" fill="none" stroke="#1e80ea" stroke-width="1.500"/><path d="M8 1h6v11H8" fill="none" stroke="#1e80ea" stroke-width="1.400"/></svg>

<div class="btn" style="top:107px"><svg width="20" height="20"><path d="M10 4l6 4-6 4-6-4z" fill="none" stroke="#1e80ea" stroke-width="1.300"/><path d="M4 11l6 4 6-4" fill="none" stroke="#1e80ea" stroke-width="1.300"/></svg></div>
<div class="btn" style="top:145px"><svg width="20" height="20"><rect x="1.500" y="6" width="17" height="8" fill="none" stroke="#1e80ea" stroke-width="1.500"/><path d="M4.500 6v3M7.500 6v4M10.500 6v3M13.500 6v4M16 6v3" stroke="#1e80ea"/></svg></div>
<div class="btn" style="top:182px"><svg width="20" height="20"><g fill="none" stroke="#1e80ea" stroke-width="1.200"><rect x="2" y="3" width="3" height="3"/><rect x="14" y="3" width="3" height="3"/><rect x="2" y="14" width="3" height="3"/><circle cx="12" cy="12" r="3"/><path d="M5 4.500h9M3.500 6v8M5 15.500h3M14 14l3 3M16 6v4"/></g></svg></div>
<div class="btn" style="top:219px"><svg width="20" height="20"><g fill="#1e80ea"><circle cx="14" cy="5" r="2"/><circle cx="5" cy="10" r="2"/><circle cx="14" cy="15" r="2"/></g><path d="M14 5l-9 5 9 5" fill="none" stroke="#1e80ea" stroke-width="1.300"/></svg></div>
<div class="btn" style="top:257px"><svg width="20" height="20"><g fill="none" stroke="#1e80ea" stroke-width="1.500"><rect x="3" y="8" width="14" height="6" rx="1"/><rect x="6" y="3.500" width="8" height="4"/><rect x="6" y="11.500" width="8" height="4.500" fill="#fff"/></g></svg></div>
<div class="a" style="left:1243px;top:377px;width:37px;height:36px;background:#0a84f5;border-radius:6px 0 0 6px"></div>
<svg class="a" style="left:1247px;top:381px" width="28" height="28" viewBox="0 0 28 28"><path d="M14 2a12 12 0 1 1-7 22l-4 1 1-5A12 12 0 0 1 14 2z" fill="none" stroke="#fff" stroke-width="1.800"/><path d="M8 9l9-1 3 4-4 7H7l3-4z" fill="#fff"/><path d="M12 11l5 1-3 5h-4z" fill="#0a84f5"/></svg>

<div class="btn" style="top:492px"><svg width="20" height="20"><path d="M17 3L3 9l6 2 2 6z" fill="none" stroke="#1e80ea" stroke-width="1.500" stroke-linejoin="round"/></svg></div>
<div class="btn" style="top:529px"><svg width="20" height="20"><rect x="3" y="4" width="14" height="12" rx="1" fill="none" stroke="#1e80ea" stroke-width="1.500"/><rect x="10" y="9" width="5" height="4" fill="#1e80ea"/></svg></div>
<div class="btn" style="top:566px"><svg width="20" height="20"><path d="M6 13a5.500 5.500 0 1 1 9 0" fill="none" stroke="#1e80ea" stroke-width="1.300"/><circle cx="10" cy="10" r="2.500" fill="none" stroke="#1e80ea" stroke-width="1.300"/><path d="M12 12l4 4" stroke="#1e80ea" stroke-width="1.800"/></svg></div>
<div class="btn" style="top:603px"><svg width="20" height="20"><path d="M5 10h10M10 5v10" stroke="#1e80ea" stroke-width="1.800"/></svg></div>
<div class="btn" style="top:641px"><svg width="20" height="20"><path d="M5.500 10h9" stroke="#1e80ea" stroke-width="1.800"/></svg></div>

<svg class="a" style="left:1183px;top:573px" width="62" height="60"><path d="M9 13a24 24 0 0 0 0 33M53 13a24 24 0 0 1 0 33" fill="none" stroke="#1e80ea" stroke-width="1.500"/><path d="M15 10a26 26 0 0 1 32 0M15 50a26 26 0 0 0 32 0" fill="none" stroke="#9aa6a8" stroke-width="1.500" opacity=".5"/><circle cx="31" cy="30" r="20" fill="#0a84f5"/><circle cx="31" cy="30" r="11.500" fill="#fff"/><path d="M22 38l-2 4 7-2z" fill="#fff"/><path d="M25 26h12M25 30h12M25 34h12" stroke="#0a84f5" stroke-width="1.800"/></svg>

<div class="a" style="left:341px;top:664px;width:289px;height:31px;background:#fff;border-radius:2px"></div>
<div class="a" style="left:353px;top:671px;font-size:14px;line-height:16px;color:#3a3a3a">Легенда</div>
<svg class="a" style="left:607px;top:673px" width="8" height="13"><path d="M1 4.500L4 1.500 7 4.500M1 8.500L4 11.500 7 8.500" fill="none" stroke="#444" stroke-width="1.300"/></svg>

<!-- TITLE BAR -->
<div class="a" style="left:0;top:0;width:1280px;height:24px;background:#dbe8fd"></div>
<div class="a" style="left:5px;top:3px;width:19px;height:19px;background:#e7effc;border-radius:4px;font-size:9px;line-height:19px;text-align:center;color:#444">4</div>
<div class="a" style="left:26px;top:3px;width:20px;height:19px;background:#c8d5e8;border-radius:4px"></div>
<svg class="a" style="left:32px;top:10px" width="8" height="5"><path d="M.5.500L4 4 7.500.500" fill="none" stroke="#556" stroke-width="1"/></svg>
<div class="a" style="left:450px;top:3px;width:133px;height:21px;background:#fff;border-radius:7px 7px 0 0"></div>
<div class="a" style="left:57px;top:6px;width:11px;height:11px;border-radius:50%;background:#e8503f;color:#fff;font-size:8px;line-height:11px;text-align:center">Я</div>
<div class="tab" style="left:74px;width:102px;color:#555">Яндекс — быстрый поиск</div>
<div class="a" style="left:191px;top:6px;width:11px;height:11px;border-radius:50%;background:#e8503f;color:#fff;font-size:8px;line-height:11px;text-align:center">Я</div>
<div class="tab" style="left:207px;width:103px;color:#555">публичная кадастровая к</div>
<svg class="a" style="left:324px;top:6px" width="10" height="12"><path d="M3 1h6l-1 2.500H3zM2 5h6.500L8 7.500H2.500zM2 9h5.500L7 11H3z" fill="#2ba6ea"/><path d="M3 1C1 4 .5 8 2 11" fill="none" stroke="#2ba6ea" stroke-width="1.500"/></svg>
<div class="tab" style="left:340px;width:103px;color:#444">НСПД | Геоинформацион</div>
<svg class="a" style="left:458px;top:6px" width="10" height="12"><path d="M3 1h6l-1 2.500H3zM2 5h6.500L8 7.500H2.500zM2 9h5.500L7 11H3z" fill="#2ba6ea"/><path d="M3 1C1 4 .5 8 2 11" fill="none" stroke="#2ba6ea" stroke-width="1.500"/></svg>
<div class="tab" style="left:474px;width:92px;color:#333">НСПД | Геоинформаци</div>
<svg class="a" style="left:568px;top:9px" width="7" height="7"><path d="M.5.500l6 6M6.500.500l-6 6" stroke="#666" stroke-width=".9"/></svg>
<div class="a" style="left:587px;top:4px;width:16px;height:16px;background:#eef4fe;border-radius:50%"></div>
<svg class="a" style="left:591px;top:8px" width="8" height="8"><path d="M4 0v8M0 4h8" stroke="#555" stroke-width="1"/></svg>
<svg class="a" style="left:1139px;top:5px" width="14" height="14"><circle cx="7" cy="7" r="6.500" fill="#c9cfd9"/><circle cx="7" cy="5.300" r="2.200" fill="#fff"/><path d="M3 11c1-2.500 7-2.500 8 0z" fill="#fff"/></svg>
<svg class="a" style="left:1171px;top:9px" width="10" height="8"><path d="M1 1h8M1 4h8M1 7h8" stroke="#555"/></svg>
<svg class="a" style="left:1199px;top:10px" width="10" height="7"><path d="M1 6h7" stroke="#888" stroke-width="1.200"/></svg>
<svg class="a" style="left:1231px;top:9px" width="9" height="9"><rect x=".5" y="2.500" width="5.500" height="6" fill="none" stroke="#555"/><path d="M3 2.500V.500h5.500V6H6" fill="none" stroke="#555"/></svg>
<svg class="a" style="left:1260px;top:9px" width="8" height="8"><path d="M.5.500l7 7M7.500.500l-7 7" stroke="#555"/></svg>

<!-- TOOLBAR -->
<div class="a" style="left:0;top:24px;width:1280px;height:30px;background:#fff"></div>
<svg class="a" style="left:10px;top:34px" width="11" height="10"><path d="M5 1L1 5l4 4M1 5h10" fill="none" stroke="#b7bcc4" stroke-width="1.100"/></svg>
<svg class="a" style="left:38px;top:32px" width="14" height="14"><circle cx="7" cy="7" r="6" fill="none" stroke="#444" stroke-width="1.100"/></svg>
<div class="a" style="left:38px;top:32px;width:14px;height:14px;font-size:8px;line-height:14px;text-align:center;color:#333">Я</div>
<svg class="a" style="left:68px;top:32px" width="13" height="13"><path d="M10.500 4.500A4.800 4.800 0 1 0 11.300 8M11 1v3.800H7.500" fill="none" stroke="#444" stroke-width="1.100"/></svg>
<div class="a" style="left:91px;top:28px;width:909px;height:23px;background:#f1f1f2;border-radius:12px"></div>
<svg class="a" style="left:96px;top:33px" width="10" height="12"><path d="M5 1l4 1.500v3.500c0 3-2 4.500-4 5.500C3 10.500 1 9 1 6V2.500z" fill="none" stroke="#555"/></svg>
<div class="a" style="left:113px;top:32px;font-size:10.500px;line-height:14px;color:#333">nspd.gov.ru</div>
<div class="a" style="left:458px;top:32px;font-size:10.100px;line-height:14px;color:#333">НСПД | Геоинформационный портал</div>
<div class="a" style="left:963px;top:30px;font-size:10px;line-height:14px;color:#888;letter-spacing:.5px">•••</div>
<svg class="a" style="left:982px;top:33px" width="10" height="12"><path d="M1 1h8v10L5 8 1 11z" fill="none" stroke="#555"/></svg>
<div class="a" style="left:1003px;top:28px;width:114px;height:23px;background:#eef0f2;border-radius:12px"></div>
<svg class="a" style="left:1007px;top:33px" width="13" height="13"><circle cx="6.500" cy="6.500" r="5" fill="none" stroke="#ef5f8b" stroke-width="2.600"/></svg>
<div class="a" style="left:1023px;top:32px;font-size:10.200px;line-height:14px;color:#333">Спросить Алису AI</div>
<div class="a" style="left:1127px;top:32px;width:1px;height:14px;background:#e4e4e4"></div>
<svg class="a" style="left:1140px;top:31px" width="14" height="16"><circle cx="7" cy="5" r="4.500" fill="#c0513f"/><rect x="2" y="9" width="10" height="5" fill="#8b8f70"/></svg>
<svg class="a" style="left:1169px;top:35px" width="14" height="10"><path d="M0 1c4-1.500 10-1.500 14 0v5c-2 3-12 3-14 0z" fill="#6c7478"/></svg>
<svg class="a" style="left:1199px;top:32px" width="13" height="14"><path d="M6.500 0l6 2v6c0 3-3 5-6 6-3-1-6-3-6-6V2z" fill="#2fb356"/><path d="M4 6l2 2 3-3" stroke="#fff" fill="none"/></svg>
<svg class="a" style="left:1229px;top:32px" width="12" height="14"><path d="M1 1h5v4h5v8H5V9H1z" fill="none" stroke="#444"/></svg>
<svg class="a" style="left:1259px;top:34px" width="10" height="11"><path d="M5 0v7M2 4.500L5 7.500 8 4.500M0 10h10" fill="none" stroke="#444"/></svg>
<div class="a" style="left:0;top:53px;width:1280px;height:1px;background:#f1f1f1"></div>

<!-- TASKBAR -->
<div class="a" style="left:0;top:700px;width:1280px;height:20px;background:linear-gradient(90deg,#0e6f9e 0%,#0d6a9f 35%,#0c5a9a 55%,#0b4592 80%,#0b3d8e 100%)"></div>
<div class="a" style="left:24px;top:700px;width:172px;height:20px;background:#1b7aa7"></div>
<svg class="a" style="left:7px;top:704px" width="11" height="11"><path d="M0 1.500l4.800-.7v4.400H0zM5.500.7L11 0v5.200H5.500zM0 5.900h4.800v4.400L0 9.600zM5.500 5.900H11V11l-5.500-.8z" fill="#fff"/></svg>
<svg class="a" style="left:32px;top:703px" width="12" height="13"><circle cx="7.500" cy="5" r="3.800" fill="none" stroke="#cfe3ee" stroke-width="1.100"/><path d="M4.700 7.800L1 12" stroke="#cfe3ee" stroke-width="1.200"/></svg>
<div class="a" style="left:51px;top:703px;font-size:10px;line-height:14px;color:#9cc6da">Поиск</div>
<div class="a" style="left:204px;top:704px;width:12px;height:12px;border-radius:50%;background:#0d9a6a"></div><div class="a" style="left:207px;top:706px;width:4px;height:6px;border:1.300px solid #bff2a0;border-radius:3px"></div>
<div class="a" style="left:229px;top:704px;width:12px;height:12px;border-radius:50%;background:#e9503d;color:#fff;font-size:8px;line-height:12px;text-align:center">Я</div>
<div class="a" style="left:256px;top:703px;width:7px;height:13px;background:#d5dfe6"></div><div class="a" style="left:257px;top:705px;width:5px;height:3px;background:#6a9cc2"></div>
<div class="a" style="left:279px;top:704px;width:11px;height:11px;border-radius:50%;background:#0b2a5a;border:1px solid #4aa7e0;box-sizing:border-box"></div>
<div class="a" style="left:297px;top:700px;width:20px;height:20px;background:#6fa6c7"></div>
<div class="a" style="left:300px;top:703px;width:13px;height:13px;border-radius:50%;background:#1a3a7a;color:#fff;font-size:9px;line-height:13px;text-align:center;font-weight:700">Y</div>
<div class="a" style="left:322px;top:700px;width:20px;height:20px;background:#2a7fac"></div>
<div class="a" style="left:326px;top:705px;width:12px;height:10px;background:#f2c94c"></div><div class="a" style="left:328px;top:708px;width:8px;height:5px;background:#3c8fc4"></div>
<div class="a" style="left:347px;top:700px;width:22px;height:20px;background:#2a7fac"></div>
<svg class="a" style="left:352px;top:704px" width="12" height="12"><circle cx="6" cy="6" r="6" fill="#e8453c"/><path d="M6 6L11.200 9A6 6 0 0 1 1 9.300z" fill="#34a853"/><path d="M6 6L1 9.300A6 6 0 0 1 6 0z" fill="#fbbc05" opacity=".9"/><circle cx="6" cy="6" r="2.600" fill="#4285f4" stroke="#fff"/></svg>
<div class="a" style="left:372px;top:700px;width:22px;height:20px;background:#2a7fac"></div>
<div class="a" style="left:376px;top:704px;width:12px;height:12px;background:#1d5fbf;border-radius:1px;color:#fff;font-size:8px;line-height:12px;text-align:center;font-weight:700">W</div>
<svg class="a" style="left:1161px;top:706px" width="10" height="7"><path d="M1 5.500L5 1.500l4 4" fill="none" stroke="#fff" stroke-width=".9"/></svg>
<svg class="a" style="left:1177px;top:703px" width="13" height="14"><path d="M1 5h2.500L7 2v9L3.500 8H1z" fill="none" stroke="#e6eefb" stroke-width=".8"/><rect x="6.500" y="7.500" width="6" height="5.500" fill="#d9342b"/></svg>
<div class="a" style="left:1195px;top:703px;font-size:9px;line-height:14px;color:#eaf1fb">РУС</div>
<div class="a" style="left:1219px;top:703px;font-size:9.500px;line-height:14px;color:#eaf1fb">10:14</div>
<svg class="a" style="left:1248px;top:704px" width="12" height="12"><path d="M0 0h12v9H6l-2.500 2.500V9H0z" fill="#eaf1fb"/></svg>
</body></html>
